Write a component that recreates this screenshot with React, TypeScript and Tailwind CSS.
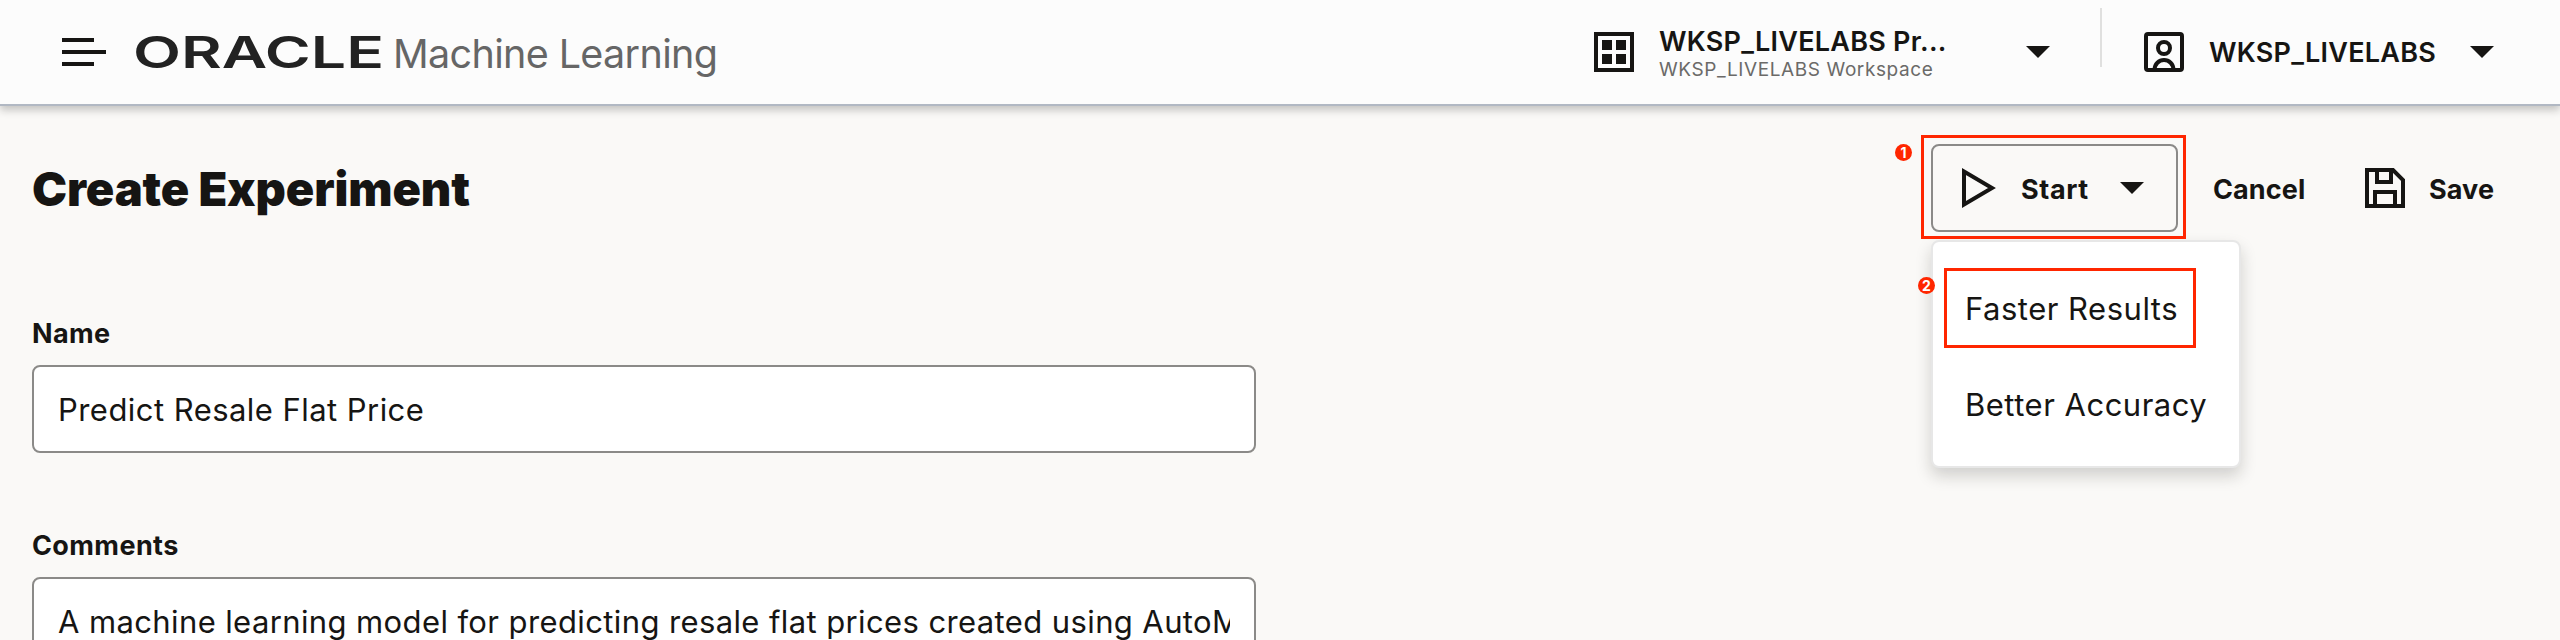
import type { ReactNode } from "react";

function Caret({ className = "" }: { className?: string }) {
  return (
    <svg width="24" height="12" viewBox="0 0 24 12" className={`shrink-0 ${className}`} fill="#161513">
      <path d="M0 0H24L12 12Z" />
    </svg>
  );
}

function MenuIcon() {
  return (
    <svg width="44" height="28" viewBox="0 0 44 28" className="shrink-0" fill="#161513">
      <path d="M0 0H32V4H0ZM0 12H44V16H0ZM0 24H32V28H0Z" />
    </svg>
  );
}

function GridIcon() {
  return (
    <svg width="40" height="40" viewBox="0 0 40 40" className="shrink-0" fill="#161513">
      <path fillRule="evenodd" d="M0 0H40V40H0ZM4 4V36H36V4Z" />
      <path d="M8 8H18V18H8ZM22 8H32V18H22ZM8 22H18V32H8ZM22 22H32V32H22Z" />
    </svg>
  );
}

function UserIcon() {
  return (
    <svg width="40" height="40" viewBox="0 0 40 40" className="shrink-0" fill="none" stroke="#161513" strokeWidth="4">
      <rect x="2" y="2" width="36" height="36" rx="2" />
      <circle cx="20" cy="16" r="6" />
      <path d="M10.500 38C10.500 32 15 28 20 28S29.500 32 29.500 38" />
    </svg>
  );
}

function PlayIcon() {
  return (
    <svg width="34" height="40" viewBox="0 0 34 40" className="shrink-0" fill="none" stroke="#161513" strokeWidth="4">
      <path d="M2 3.500L30 20L2 36.500Z" />
    </svg>
  );
}

function SaveIcon() {
  return (
    <svg width="40" height="40" viewBox="0 0 40 40" className="shrink-0" fill="none" stroke="#161513" strokeWidth="4">
      <path d="M2 2H28L38 12V38H2Z" />
      <path d="M12 2V14H26V2" />
      <path d="M10 38V24H30V38" />
    </svg>
  );
}

function Logo() {
  return (
    <svg width="246" height="60" viewBox="0 0 246 60" className="shrink-0 overflow-visible">
      <text
        x="-3"
        y="46"
        fill="#222"
        fontFamily="Inter, sans-serif"
        fontSize="44"
        fontWeight="600"
        textLength="251"
        lengthAdjust="spacingAndGlyphs"
      >
        ORACLE
      </text>
    </svg>
  );
}

function Step({ n, className }: { n: string; className: string }) {
  return (
    <span
      className={`absolute flex size-[17px] items-center justify-center rounded-full bg-[#ff2600] text-[14px] leading-none font-bold text-white ${className}`}
    >
      {n}
    </span>
  );
}

function Field({ label, children }: { label: string; children: ReactNode }) {
  return (
    <div className="flex w-[1224px] flex-col">
      <span className="h-9 pt-px text-[27px] leading-9 font-[650] tracking-[0.4px]">{label}</span>
      <div className="mt-[14px] h-[88px] rounded-lg border-2 border-[#8b8a88] bg-white px-6">
        <div className="overflow-hidden pt-px text-[31px] leading-[84px] whitespace-nowrap">{children}</div>
      </div>
    </div>
  );
}

export default function App() {
  return (
    <div className="flex h-[640px] w-[2560px] flex-col overflow-hidden bg-[#faf9f7] font-['Inter',sans-serif] text-[#161513]">
      <header className="relative z-10 flex h-[106px] shrink-0 items-start border-b-2 border-[#b1b8c3] bg-[#fcfcfc] shadow-[0_4px_8px_rgba(22,21,19,0.24)]">
        <div className="flex h-[104px] flex-1 items-center pl-[62px]">
          <MenuIcon />
          <div className="ml-[30px] flex">
            <Logo />
          </div>
          <span className="ml-[11px] pt-[3px] text-[39.500px] leading-[48px] tracking-[-0.650px] text-[#666]">Machine Learning</span>
        </div>
        <div className="flex h-[104px] items-center">
          <GridIcon />
          <div className="ml-[25px] flex w-[367px] flex-col pt-[3px]">
            <span className="text-[27px] leading-8 font-[640] tracking-[0.25px]">WKSP_LIVELABS Pr...</span>
            <span className="text-[19px] leading-6 tracking-[0.600px] text-[#6b6a68]">WKSP_LIVELABS Workspace</span>
          </div>
          <Caret />
        </div>
        <div className="mt-2 ml-[50px] h-[59px] w-[2px] bg-[#e0e0df]" />
        <div className="flex h-[104px] w-[458px] items-center pl-[42px]">
          <UserIcon />
          <span className="ml-[25px] w-[261px] pt-[3px] text-[27px] font-[640] tracking-[0.25px] whitespace-nowrap">WKSP_LIVELABS</span>
          <Caret />
        </div>
      </header>

      <main className="flex flex-1 flex-col px-8 pt-[38px]">
        <div className="flex h-[88px] shrink-0 items-center">
          <h1 className="flex-1 pt-px text-[47px] leading-[56px] font-black tracking-[-0.120px]">Create Experiment</h1>
          <div className="relative h-[88px] w-[247px]">
            <button className="flex h-[88px] w-[247px] items-center rounded-lg border-2 border-[#8b8a88] pl-[29px]">
              <PlayIcon />
              <span className="ml-[25px] w-[99px] pt-1 text-left text-[27px] font-[650] tracking-[0.6px]">Start</span>
              <Caret />
            </button>
            <div className="absolute top-[96px] left-0 flex h-[228px] w-[310px] flex-col rounded-lg border-2 border-[#e7e7e7] bg-white pt-[19px] pl-8 text-[31px] leading-[96px] tracking-[0.5px] whitespace-nowrap shadow-[0_8px_16px_rgba(22,21,19,0.18)]">
              <span>Faster Results</span>
              <span>Better Accuracy</span>
            </div>
            <div className="absolute -top-[9px] -left-[10px] h-[104px] w-[265px] border-[3px] border-[#ff2600]" />
            <div className="absolute top-[124px] left-[13px] h-[80px] w-[252px] border-[3px] border-[#ff2600]" />
            <Step n="1" className="top-0 -left-[36px]" />
            <Step n="2" className="top-[133px] -left-[13px]" />
          </div>
          <span className="ml-[35px] w-[152px] pt-1 text-[27px] font-[650] tracking-[0.1px]">Cancel</span>
          <SaveIcon />
          <span className="ml-[24px] w-[99px] pt-1 text-[27px] font-[650] tracking-[0.1px]">Save</span>
        </div>
        <div className="mt-[83px] flex flex-col gap-[74px]">
          <Field label="Name">
            <span className="tracking-[0.45px]">Predict Resale Flat Price</span>
          </Field>
          <Field label="Comments">
            <span className="tracking-[0.39px]">
              A machine learning model for predicting resale flat prices created using AutoML
            </span>
          </Field>
        </div>
      </main>
    </div>
  );
}
